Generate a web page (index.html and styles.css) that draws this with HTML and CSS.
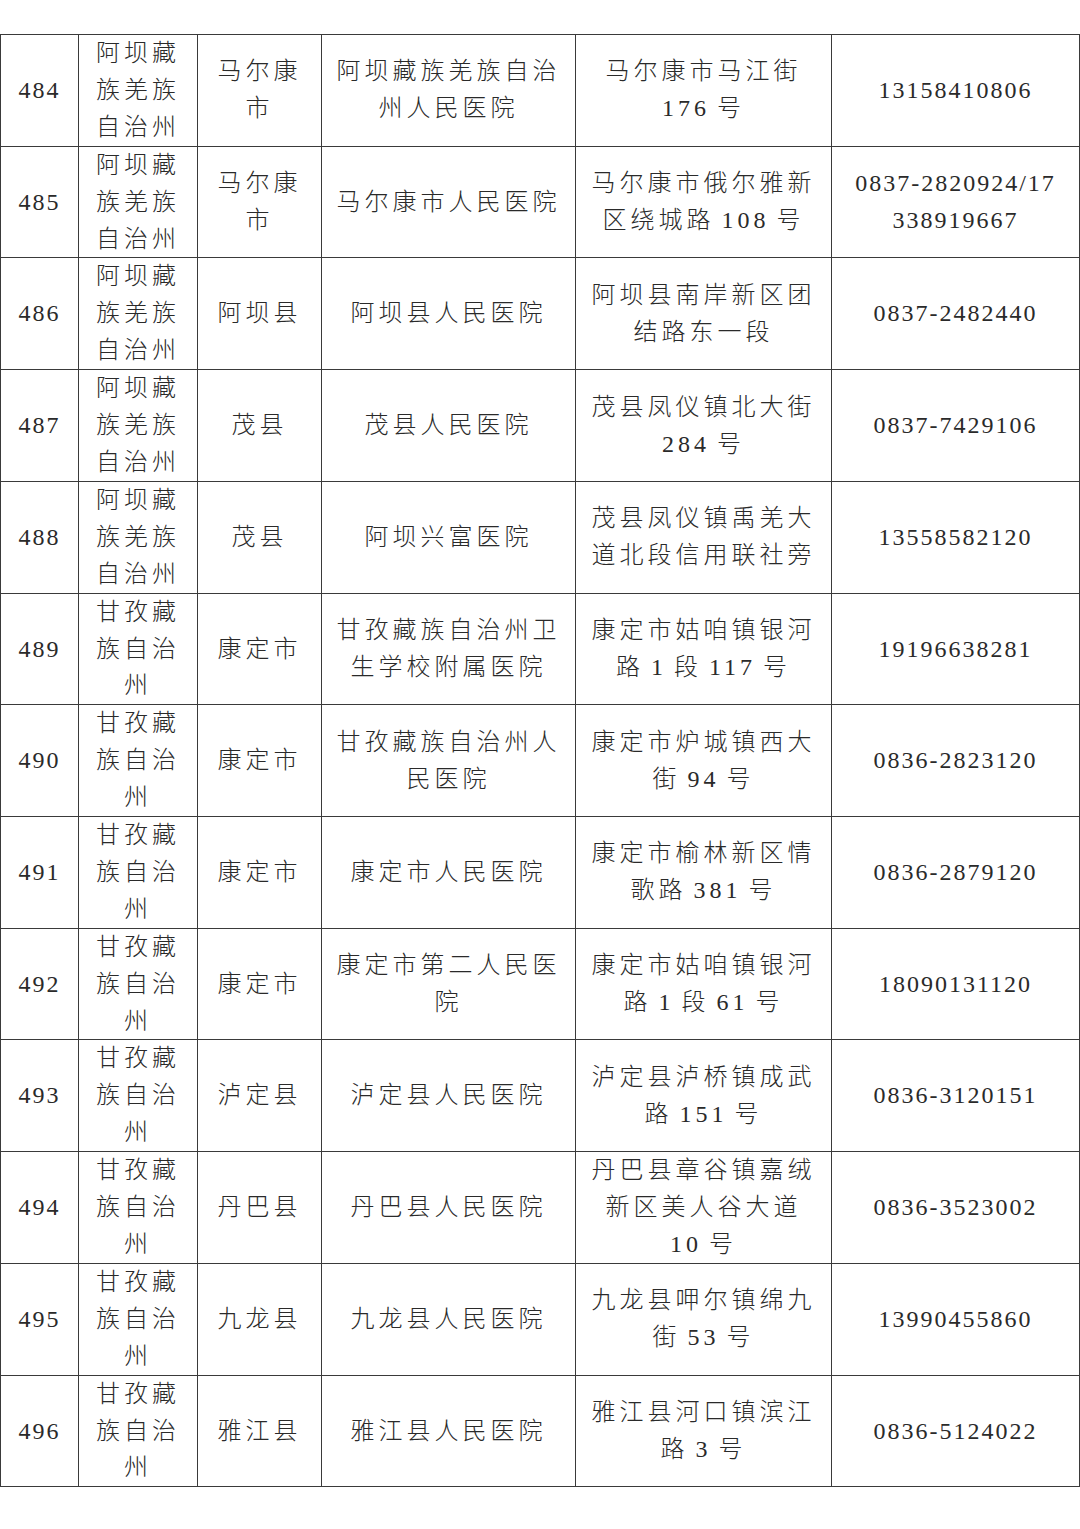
FILE: index.html
```html
<!DOCTYPE html>
<html lang="zh-CN">
<head>
<meta charset="utf-8">
<title>医院列表</title>
<link rel="stylesheet" href="styles.css">
</head>
<body>
<div class="page">
<table class="grid">
<colgroup>
<col class="c1"><col class="c2"><col class="c3"><col class="c4"><col class="c5"><col class="c6">
</colgroup>
<tbody>
<tr><td class="num">484</td><td>阿坝藏<br>族羌族<br>自治州</td><td>马尔康<br>市</td><td>阿坝藏族羌族自治<br>州人民医院</td><td>马尔康市马江街<br>176 号</td><td class="num">13158410806</td></tr>
<tr><td class="num">485</td><td>阿坝藏<br>族羌族<br>自治州</td><td>马尔康<br>市</td><td>马尔康市人民医院</td><td>马尔康市俄尔雅新<br>区绕城路 108 号</td><td class="num">0837-2820924/17<br>338919667</td></tr>
<tr><td class="num">486</td><td>阿坝藏<br>族羌族<br>自治州</td><td>阿坝县</td><td>阿坝县人民医院</td><td>阿坝县南岸新区团<br>结路东一段</td><td class="num">0837-2482440</td></tr>
<tr><td class="num">487</td><td>阿坝藏<br>族羌族<br>自治州</td><td>茂县</td><td>茂县人民医院</td><td>茂县凤仪镇北大街<br>284 号</td><td class="num">0837-7429106</td></tr>
<tr><td class="num">488</td><td>阿坝藏<br>族羌族<br>自治州</td><td>茂县</td><td>阿坝兴富医院</td><td>茂县凤仪镇禹羌大<br>道北段信用联社旁</td><td class="num">13558582120</td></tr>
<tr><td class="num">489</td><td>甘孜藏<br>族自治<br>州</td><td>康定市</td><td>甘孜藏族自治州卫<br>生学校附属医院</td><td>康定市姑咱镇银河<br>路 1 段 117 号</td><td class="num">19196638281</td></tr>
<tr><td class="num">490</td><td>甘孜藏<br>族自治<br>州</td><td>康定市</td><td>甘孜藏族自治州人<br>民医院</td><td>康定市炉城镇西大<br>街 94 号</td><td class="num">0836-2823120</td></tr>
<tr><td class="num">491</td><td>甘孜藏<br>族自治<br>州</td><td>康定市</td><td>康定市人民医院</td><td>康定市榆林新区情<br>歌路 381 号</td><td class="num">0836-2879120</td></tr>
<tr><td class="num">492</td><td>甘孜藏<br>族自治<br>州</td><td>康定市</td><td>康定市第二人民医<br>院</td><td>康定市姑咱镇银河<br>路 1 段 61 号</td><td class="num">18090131120</td></tr>
<tr><td class="num">493</td><td>甘孜藏<br>族自治<br>州</td><td>泸定县</td><td>泸定县人民医院</td><td>泸定县泸桥镇成武<br>路 151 号</td><td class="num">0836-3120151</td></tr>
<tr><td class="num">494</td><td>甘孜藏<br>族自治<br>州</td><td>丹巴县</td><td>丹巴县人民医院</td><td>丹巴县章谷镇嘉绒<br>新区美人谷大道<br>10 号</td><td class="num">0836-3523002</td></tr>
<tr><td class="num">495</td><td>甘孜藏<br>族自治<br>州</td><td>九龙县</td><td>九龙县人民医院</td><td>九龙县呷尔镇绵九<br>街 53 号</td><td class="num">13990455860</td></tr>
<tr><td class="num">496</td><td>甘孜藏<br>族自治<br>州</td><td>雅江县</td><td>雅江县人民医院</td><td>雅江县河口镇滨江<br>路 3 号</td><td class="num">0836-5124022</td></tr>
</tbody>
</table>
</div>
</body>
</html>
```

FILE: styles.css
```css
html, body {
  margin: 0;
  padding: 0;
  background: #ffffff;
}

.page {
  padding-top: 34px;
}

.grid {
  border-collapse: collapse;
  table-layout: fixed;
  width: 1079px;
  font-family: "Liberation Serif", "Noto Sans CJK SC", serif;
  font-size: 24px;
  font-weight: 300;
  color: #2a2a2a;
}

.c1 { width: 78px; }
.c2 { width: 119px; }
.c3 { width: 124px; }
.c4 { width: 254px; }
.c5 { width: 256px; }
.c6 { width: 248px; }

.grid td {
  border: 1.5px solid #3a3a3a;
  height: 110px;
  padding: 0;
  text-align: center;
  vertical-align: middle;
  line-height: 36.9px;
  letter-spacing: 4px;
  word-spacing: -3px;
  white-space: nowrap;
  overflow: hidden;
}

.grid td.num {
  font-family: "Liberation Serif", serif;
  font-weight: 400;
  letter-spacing: 2px;
  word-spacing: 0;
}
```
